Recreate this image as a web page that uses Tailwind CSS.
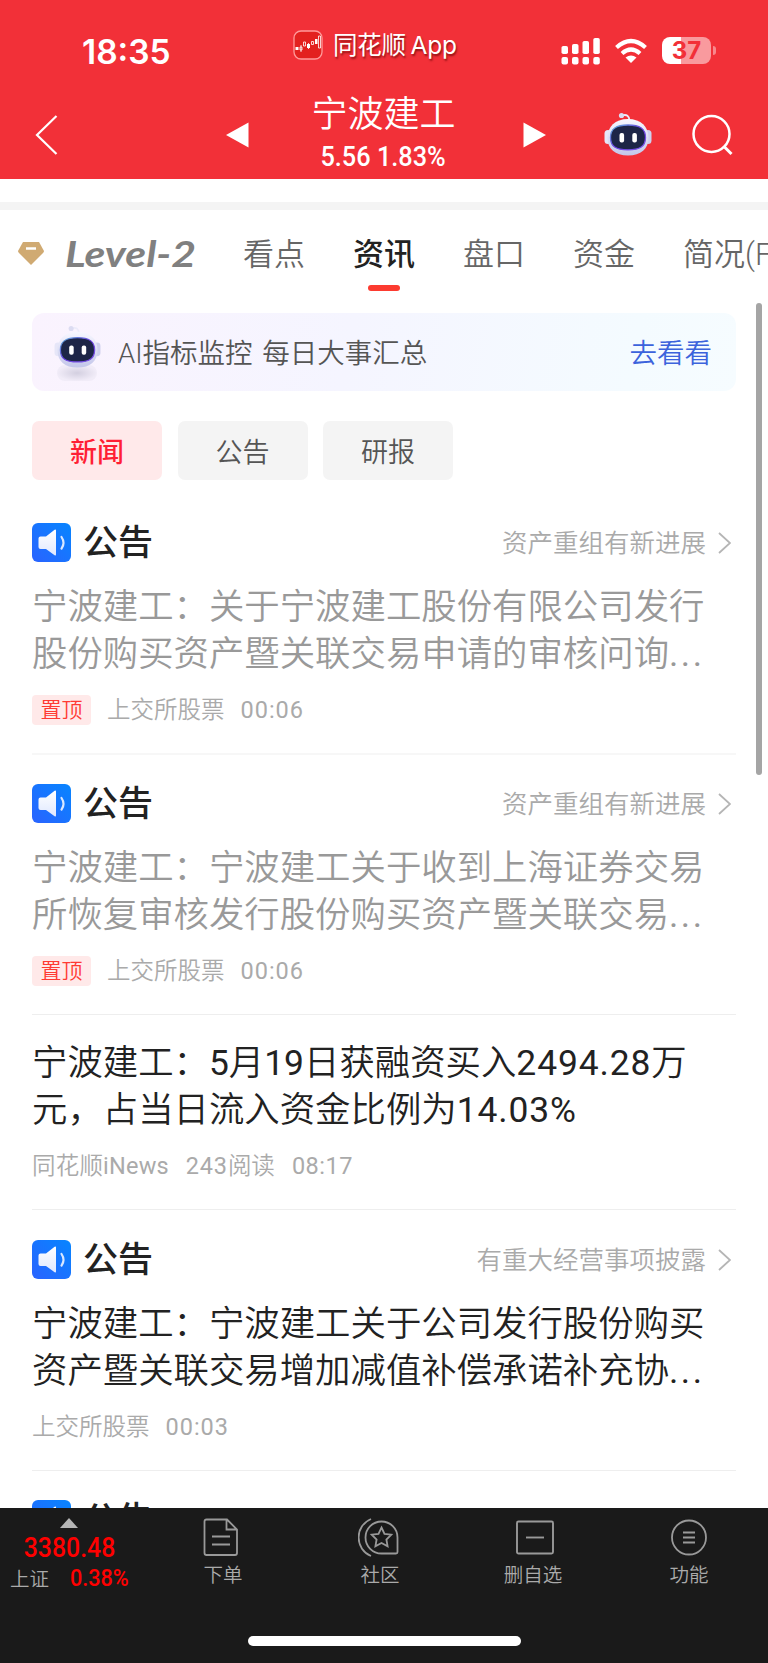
<!DOCTYPE html>
<html lang="zh-CN">
<head>
    <meta charset="UTF-8">
    <meta name="viewport" content="width=device-width, initial-scale=1.0">
    <title>宁波建工 - 资讯</title>
    <script src="https://cdn.jsdelivr.net/npm/@tailwindcss/browser@4"></script>
    <style>
        body {
            font-family: Roboto, 'Noto Sans CJK SC', sans-serif;
            font-weight: 350;
        }
    </style>
</head>
<body class="w-[768px] h-[1663px] overflow-hidden bg-white">
    <!-- 公共图标 -->
    <svg class="absolute w-0 h-0">
        <defs>
            <linearGradient id="blue" x1="0" y1="1" x2="1" y2="0">
                <stop offset="0" stop-color="#2a63ff"/>
                <stop offset="1" stop-color="#0785ff"/>
            </linearGradient>
            <linearGradient id="horn" x1="0" y1="0" x2="0" y2="1">
                <stop offset="0" stop-color="#ffffff"/>
                <stop offset="1" stop-color="#dfe8ff"/>
            </linearGradient>
            <linearGradient id="shell" x1="0" y1="0" x2="0" y2="1">
                <stop offset="0" stop-color="#f7f7ff"/>
                <stop offset="1" stop-color="#c3c6ea"/>
            </linearGradient>
            <linearGradient id="rim" x1="0" y1="0" x2="1" y2="1">
                <stop offset="0" stop-color="#5fb4d8"/>
                <stop offset=".5" stop-color="#6a3fe0"/>
                <stop offset="1" stop-color="#7d55e8"/>
            </linearGradient>
        </defs>
        <symbol id="speaker" viewBox="0 0 39 39">
            <rect width="39" height="39" rx="6" fill="url(#blue)"/>
            <path d="M8.500 13.500H14L22.600 6.800Q24 6 24 7.500V31.500Q24 33 22.600 32.200L14 26H8.500Q6.500 26 6.500 24V15.500Q6.500 13.500 8.500 13.500Z" fill="url(#horn)"/>
            <path d="M29.500 14Q33.500 19.800 29.500 25.700" fill="none" stroke="#d9e8ff" stroke-width="2.200" stroke-linecap="round"/>
        </symbol>
        <symbol id="robot" viewBox="0 0 48 44">
            <path d="M18 3.500C23 2 25 4 25.500 8" fill="none" stroke="#ecebfa" stroke-width="1.800"/>
            <circle cx="17.500" cy="3.500" r="2.600" fill="#dcdcf2"/>
            <rect x="0.500" y="18" width="7" height="14" rx="3.500" fill="#e6e6f8"/>
            <rect x="40.500" y="18" width="7" height="14" rx="3.500" fill="#cfd0ee"/>
            <path d="M24 7C37 7 44.500 15 44.500 25.500C44.500 37 37 43.500 24 43.500S3.500 37 3.500 25.500C3.500 15 11 7 24 7Z" fill="url(#shell)"/>
            <path d="M24 13C36 13 41.500 16.500 41.500 25.500C41.500 34.500 36 37.800 24 37.800S6.500 34.500 6.500 25.500C6.500 16.500 12 13 24 13Z" fill="#1d2547" stroke="url(#rim)" stroke-width="1.300"/>
            <rect x="15.500" y="21" width="4.600" height="9.500" rx="2" fill="#fff"/>
            <rect x="28.300" y="21" width="4.600" height="9.500" rx="2" fill="#fff"/>
        </symbol>
        <symbol id="arrow" viewBox="0 0 13 22">
            <path d="M1 1L12 11L1 21" fill="none" stroke="#b5b5b5" stroke-width="1.800"/>
        </symbol>
    </svg>

    <div class="relative h-[1663px] flex flex-col">
        <!-- 状态栏 -->
        <header class="h-[179px] shrink-0 bg-[#f23038] text-white">
            <div class="h-[90px] flex items-start">
                <div class="w-[293px] pl-[82px] pt-[32px] text-[33.500px] leading-[40px] font-semibold font-[Inter]">18:35</div>
                <div class="w-[268px] pt-[30px] flex items-center gap-[10px]">
                    <svg class="w-[30px] h-[30px]" viewBox="0 0 30 30">
                        <rect x="1" y="1" width="28" height="28" rx="7" fill="#e3211f" stroke="#ff9a9a" stroke-width="1.300"/>
                        <path d="M2.500 17h3v3h-3zM14 14h3v4h-3zM22 9h2.500v5H22z" fill="#fff"/>
                        <path d="M7 17h2v3H7zM8 15v7M10.500 12h2v4h-2zM18.500 11.500h2v3h-2zM25.500 6h2v12h-2zM15.500 13v6" fill="none" stroke="#fff" stroke-width=".8"/>
                    </svg>
                    <div class="text-[24.500px] leading-[30px] font-normal font-[Inter,'Noto_Sans_CJK_SC'] tracking-[-0.200px] [word-spacing:-2px] [text-shadow:1px_2px_2px_rgba(90,0,0,.65)] whitespace-nowrap">同花顺 App</div>
                </div>
                <div class="pt-[37px] flex items-start">
                    <svg class="w-[39px] h-[28px]" viewBox="0 0 39 28" fill="#fff">
                        <rect x="0.500" y="9" width="6.500" height="8" rx="1.800"/><rect x="11" y="7" width="6.500" height="10" rx="1.800"/>
                        <rect x="21.500" y="4" width="6.500" height="13" rx="1.800"/><rect x="32.300" y="1" width="6.500" height="16" rx="1.800"/>
                        <rect x="0.500" y="20" width="6.500" height="7.500" rx="2"/><rect x="11" y="20" width="6.500" height="7.500" rx="2"/>
                        <rect x="21.500" y="20" width="6.500" height="7.500" rx="2"/><rect x="32.300" y="20" width="6.500" height="7.500" rx="2"/>
                    </svg>
                    <svg class="ml-[14px] w-[34px] h-[28px]" viewBox="0 0 34 28" fill="none" stroke="#fff" stroke-width="4.200">
                        <path d="M2.500 10.500Q17 -2.500 31.500 10.500M8 16.500Q17 8.500 26 16.500"/>
                        <path d="M17 26L11.500 20.500Q17 16.500 22.500 20.500Z" fill="#fff" stroke="none"/>
                    </svg>
                    <div class="ml-[14px] flex items-center">
                        <div class="w-[49px] h-[27px] rounded-[8px] bg-[linear-gradient(90deg,#fff_38%,#f99a9e_38%)] text-[#f23038] text-center font-[Inter] font-bold text-[24px] leading-[28px]">37</div>
                        <div class="ml-[2px] w-[3px] h-[9px] rounded-r-full bg-[#f8888d]"></div>
                    </div>
                </div>
            </div>
            <!-- 股票标题 -->
            <div class="h-[89px] flex items-center">
                <svg class="ml-[35px] w-[24px] h-[40px]" viewBox="0 0 24 40" fill="none" stroke="#fff" stroke-width="2.200"><path d="M21.500 1L2 20L21.500 39"/></svg>
                <svg class="ml-[167px] w-[23px] h-[26px]" viewBox="0 0 23 26" fill="#fff"><path d="M0 13L22.500 0.500V25.500Z"/></svg>
                <div class="w-[275px] pr-[6px] flex flex-col items-center">
                    <div class="text-[36px] leading-[45px] mt-[-3px]">宁波建工</div>
                    <div class="font-medium text-[27.500px] leading-[32px] mt-[3px] scale-x-[.92]">5.56 1.83%</div>
                </div>
                <svg class="-ml-[1px] w-[23px] h-[26px]" viewBox="0 0 23 26" fill="#fff"><path d="M23 13L0.500 0.500V25.500Z"/></svg>
                <svg class="ml-[58px] mb-[2px] w-[48px] h-[44px]"><use href="#robot"/></svg>
                <svg class="ml-[40px] w-[42px] h-[42px]" viewBox="0 0 42 42" fill="none" stroke="#fff" stroke-width="2.500"><circle cx="19.500" cy="20" r="18"/><path d="M31.500 32L39.500 40" stroke-width="3"/></svg>
            </div>
        </header>
        <div class="h-[31px] shrink-0 pt-[23px]"><div class="h-[8px] bg-[#f4f4f4]"></div></div>

        <!-- 标签导航 -->
        <nav class="h-[103px] shrink-0 overflow-hidden whitespace-nowrap flex items-start text-[31px] leading-[46px] text-[#666] pt-[22px]">
            <svg class="ml-[17px] mt-[9px] w-[28px] h-[26px] shrink-0" viewBox="0 0 28 26">
                <path d="M6 1H22L27 10Q27 11 26 12L14 24L2 12Q1 11 1 10Z" fill="#d0aa72"/>
                <path d="M9 7.500H19" stroke="#fff" stroke-width="2.500"/>
            </svg>
            <div class="ml-[20px] -mt-[2px] w-[130px] shrink-0"><div class="w-max origin-left font-[Lato] italic font-bold text-[36px] text-[#808080] scale-x-[1.19]">Level-2</div></div>
            <div class="ml-[48px]">看点</div>
            <div class="ml-[48px] flex flex-col items-center text-[#222] font-medium">
                <span>资讯</span>
                <span class="mt-[7px] w-[32px] h-[6px] rounded-full bg-[#fc3b30]"></span>
            </div>
            <div class="ml-[48px]">盘口</div>
            <div class="ml-[48px]">资金</div>
            <div class="ml-[48px]">简况(F10)</div>
        </nav>

        <main class="px-[32px]">
            <!-- AI 横幅 -->
            <div class="h-[78px] rounded-[12px] bg-[linear-gradient(100deg,#faf3fe,#f5f5ff_45%,#f4fbff_85%,#f6fcff)] flex items-center pl-[22px] pr-[24px] text-[27.500px] text-[#555]">
                <div class="relative w-[47px] h-[60px]">
                    <div class="absolute left-[3px] top-[43px] w-[40px] h-[16px] rounded-full bg-[radial-gradient(#d3cfe0,#f1ecf8_70%)]"></div>
                    <svg class="relative mt-[3px] w-[47px] h-[43px]"><use href="#robot"/></svg>
                </div>
                <span class="ml-[17px] pt-[4px] [word-spacing:3px]">AI指标监控 每日大事汇总</span>
                <span class="ml-auto pt-[4px] text-[#3c63dc]">去看看</span>
            </div>

            <!-- 分类按钮 -->
            <div class="mt-[30px] flex gap-[15.500px] text-[27px] leading-[64px] text-center text-[#555]">
                <div class="w-[130px] h-[59px] rounded-[7px] bg-[#ffe9ea] text-[#ff1f35] font-medium">新闻</div>
                <div class="w-[130px] h-[59px] rounded-[7px] bg-[#f4f4f4]">公告</div>
                <div class="w-[130px] h-[59px] rounded-[7px] bg-[#f4f4f4]">研报</div>
            </div>

            <!-- 新闻列表 -->
            <article class="mt-[14px] h-[261px] pt-[29px] border-b-2 border-[#f7f7f7]">
                <div class="h-[39px] flex items-center">
                    <svg class="w-[39px] h-[39px]"><use href="#speaker"/></svg>
                    <h2 class="ml-[12px] pt-[3px] text-[35px] font-medium text-[#222]">公告</h2>
                    <span class="ml-auto pt-[2px] text-[25.500px] text-[#aaa]">资产重组有新进展</span>
                    <svg class="ml-[12px] mr-[5px] w-[13px] h-[22px]"><use href="#arrow"/></svg>
                </div>
                <div class="mt-[22px] text-[35.400px] leading-[47px] text-[#999] whitespace-nowrap">宁波建工：关于宁波建工股份有限公司发行<br>股份购买资产暨关联交易申请的审核问询<span class="tracking-[2.500px] font-normal">...</span></div>
                <div class="mt-[17px] h-[30px] flex items-center text-[23.500px] text-[#aaa]">
                    <span class="w-[59px] h-[30px] rounded-[4px] bg-[#ffe9e9] text-[#ff3a32] text-[21px] leading-[31px] text-center">置顶</span>
                    <span class="ml-[16px] pt-[2px]">上交所股票</span><span class="ml-[16px] pt-[2px] tracking-[1px] font-normal">00:06</span>
                </div>
            </article>

            <article class="h-[260px] pt-[29px] border-b border-[#eee]">
                <div class="h-[39px] flex items-center">
                    <svg class="w-[39px] h-[39px]"><use href="#speaker"/></svg>
                    <h2 class="ml-[12px] pt-[3px] text-[35px] font-medium text-[#222]">公告</h2>
                    <span class="ml-auto pt-[2px] text-[25.500px] text-[#aaa]">资产重组有新进展</span>
                    <svg class="ml-[12px] mr-[5px] w-[13px] h-[22px]"><use href="#arrow"/></svg>
                </div>
                <div class="mt-[22px] text-[35.400px] leading-[47px] text-[#999] whitespace-nowrap">宁波建工：宁波建工关于收到上海证券交易<br>所恢复审核发行股份购买资产暨关联交易<span class="tracking-[2.500px] font-normal">...</span></div>
                <div class="mt-[17px] h-[30px] flex items-center text-[23.500px] text-[#aaa]">
                    <span class="w-[59px] h-[30px] rounded-[4px] bg-[#ffe9e9] text-[#ff3a32] text-[21px] leading-[31px] text-center">置顶</span>
                    <span class="ml-[16px] pt-[2px]">上交所股票</span><span class="ml-[16px] pt-[2px] tracking-[1px] font-normal">00:06</span>
                </div>
            </article>

            <article class="h-[195px] pt-[25px] border-b border-[#eee]">
                <div class="text-[35.400px] leading-[47px] text-[#222] whitespace-nowrap">宁波建工：<span class="font-normal">5</span>月<span class="font-normal">19</span>日获融资买入<span class="font-normal tracking-[0.900px]">2494.28</span>万<br>元，占当日流入资金比例为<span class="font-normal tracking-[0.900px]">14.03%</span></div>
                <div class="mt-[17px] h-[30px] pt-[2px] flex items-center gap-[17px] text-[23.500px] text-[#aaa]">
                    <span class="tracking-[0.2px]">同花顺<span class="font-normal">iNews</span></span><span><span class="font-normal tracking-[0.800px]">243</span>阅读</span><span class="font-normal tracking-[0.500px]">08:17</span>
                </div>
            </article>

            <article class="h-[261px] pt-[30px] border-b border-[#eee]">
                <div class="h-[39px] flex items-center">
                    <svg class="w-[39px] h-[39px]"><use href="#speaker"/></svg>
                    <h2 class="ml-[12px] pt-[3px] text-[35px] font-medium text-[#222]">公告</h2>
                    <span class="ml-auto pt-[2px] text-[25.500px] text-[#aaa]">有重大经营事项披露</span>
                    <svg class="ml-[12px] mr-[5px] w-[13px] h-[22px]"><use href="#arrow"/></svg>
                </div>
                <div class="mt-[22px] text-[35.400px] leading-[47px] text-[#222] whitespace-nowrap">宁波建工：宁波建工关于公司发行股份购买<br>资产暨关联交易增加减值补偿承诺补充协<span class="tracking-[2.500px] font-normal">...</span></div>
                <div class="mt-[17px] h-[30px] pt-[2px] flex items-center text-[23.500px] text-[#aaa]">
                    <span>上交所股票</span><span class="ml-[16px] tracking-[1px] font-normal">00:03</span>
                </div>
            </article>

            <article class="pt-[29px]">
                <div class="h-[39px] flex items-center">
                    <svg class="w-[39px] h-[39px]"><use href="#speaker"/></svg>
                    <h2 class="ml-[12px] pt-[3px] text-[35px] font-medium text-[#222]">公告</h2>
                </div>
            </article>
        </main>

        <!-- 滚动条 -->
        <div class="absolute left-[756px] top-[303px] w-[6px] h-[472px] rounded-full bg-[#a5a5a5]"></div>

        <!-- 底部工具栏 -->
        <footer class="absolute left-0 bottom-0 w-[768px] h-[155px] bg-[#1a1a1a] text-[#aaa] overflow-hidden">
            <div class="h-[90px] flex text-[19.500px] leading-[28px]">
                <div class="w-[145px] shrink-0 pt-[10px]">
                    <svg class="ml-[60px] w-[18px] h-[10px]" viewBox="0 0 18 10"><path d="M9 0L18 10H0Z" fill="#b5b5b5"/></svg>
                    <div class="w-[139px] text-center font-medium text-[27px] leading-[32px] mt-[4px] text-[#f00] scale-x-[.92]">3380.48</div>
                    <div class="flex items-center h-[28px] pl-[10px] mt-[1px]">
                        <span class="pt-[2px]">上证</span>
                        <span class="ml-[21px] origin-left font-medium text-[23.500px] text-[#f00] scale-x-[.92] mb-[2px]">0.38%</span>
                    </div>
                </div>
                <div class="w-[156px] shrink-0 pt-[10px] flex flex-col items-center">
                    <svg class="mr-[4px] w-[36px] h-[40px]" viewBox="0 0 36 40" fill="none" stroke="#999" stroke-width="1.800"><path d="M3.500 1.500H24L34 11.500V35Q34 37 32 37H3.500Q1.500 37 1.500 35V3.500Q1.500 1.500 3.500 1.500ZM23.500 1.500V11.500H34M9 18.500H27M9 26.500H27"/></svg>
                    <span class="mt-[4px]">下单</span>
                </div>
                <div class="w-[158px] shrink-0 pt-[10px] flex flex-col items-center">
                    <svg class="mr-[2px] w-[42px] h-[40px]" viewBox="0 0 42 40" fill="none" stroke="#999" stroke-width="1.800"><path d="M13 1A20 20 0 0 0 13 38M23.500 3.500A16 16 0 0 0 23.500 35.500H38Q39.500 35.500 39.500 34V19.500A16 16 0 0 0 23.500 3.500Z"/><path d="M23.500 9.500L26.500 15.800L33.300 16.700L28.400 21.500L29.600 28.300L23.500 25L17.400 28.300L18.600 21.500L13.700 16.700L20.500 15.800Z"/></svg>
                    <span class="mt-[4px]">社区</span>
                </div>
                <div class="w-[148px] shrink-0 pt-[10px] flex flex-col items-center">
                    <svg class="ml-[4px] w-[38px] h-[40px]" viewBox="0 0 38 40" fill="none" stroke="#999" stroke-width="1.900"><rect x="1" y="3.500" width="36" height="32" rx="1.500"/><path d="M10 19.500H28"/></svg>
                    <span class="mt-[4px]">删自选</span>
                </div>
                <div class="w-[164px] shrink-0 pt-[10px] flex flex-col items-center">
                    <svg class="w-[36px] h-[40px]" viewBox="0 0 36 40" fill="none" stroke="#999" stroke-width="1.800"><circle cx="18" cy="19.500" r="17"/><path d="M12 14.500H24M12 19.500H24M12 24.500H24"/></svg>
                    <span class="mt-[4px]">功能</span>
                </div>
            </div>
            <div class="mt-[38px] ml-[248px] w-[273px] h-[10px] rounded-full bg-white"></div>
        </footer>
    </div>
</body>
</html>
